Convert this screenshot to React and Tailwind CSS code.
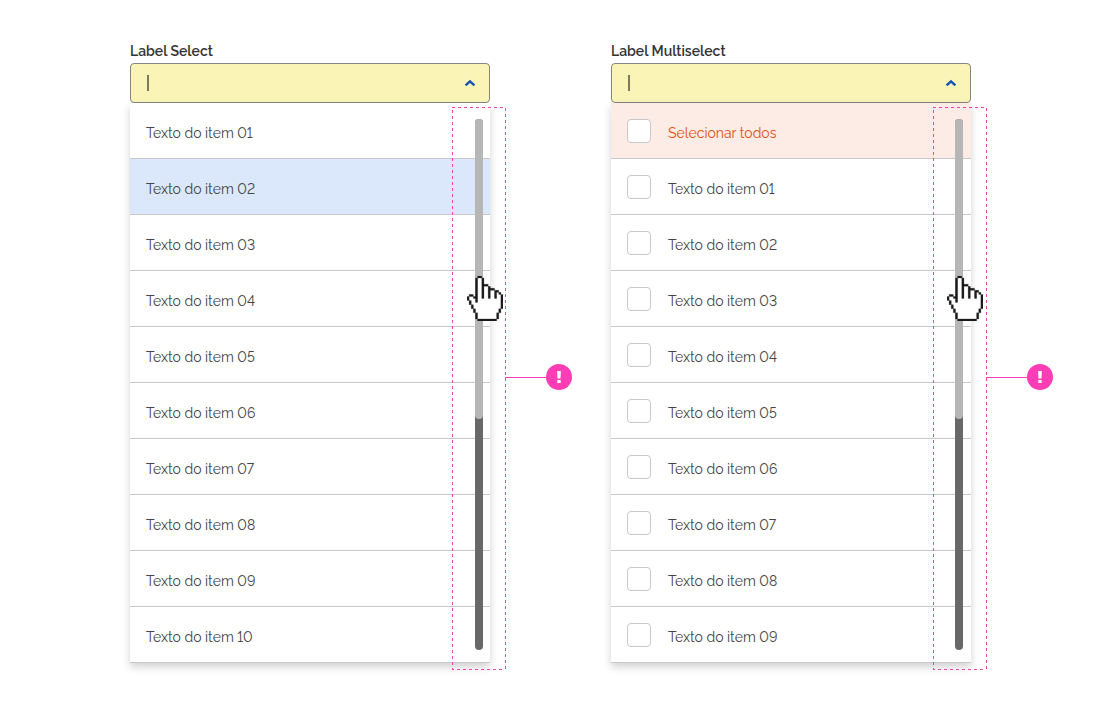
import React from "react";

const HAND = [
  "     ##          ",
  "    #..#         ",
  "    #..#         ",
  "    #..#         ",
  "    #..###       ",
  "    #..#..#      ",
  "    #..#..###    ",
  "    #..#..#..##  ",
  "    #..#..#..#.# ",
  " ## #..#..#..#..#",
  "#..##..#..#..#..#",
  "#...#...........#",
  " #..#...........#",
  " #..............#",
  "  #.............#",
  "  #.............#",
  "   #...........# ",
  "   #...........# ",
  "    #.........#  ",
  "    #.........#  ",
  "    #.........#  ",
  "     #########   ",
];

function cells(mark) {
  let d = "";
  HAND.forEach((row, y) => {
    row.split("").forEach((c, x) => {
      if (c === mark) d += `M${x} ${y}h1v1h-1z`;
    });
  });
  return d;
}

function HandCursor() {
  return (
    <svg
      className="absolute -left-2 top-[157px] h-[45px] w-9"
      viewBox="0 0 17 22"
      preserveAspectRatio="none"
      aria-hidden="true"
    >
      <path d={cells(".")} fill="#ffffff" stroke="#ffffff" strokeWidth="0.4" />
      <path d={cells("#")} fill="#1c1c1c" stroke="#1c1c1c" strokeWidth="0.12" />
    </svg>
  );
}

function Field({ id, label }) {
  return (
    <>
      <label htmlFor={id} className="block h-5 text-sm leading-4 font-semibold text-[#333333]">
        {label}
      </label>
      <div className="flex h-10 items-center rounded border border-[#868480] bg-[#faf4b7] pr-[11px] pl-4">
        <span className="h-4 w-0.5 bg-[#7d795c]" aria-hidden="true" />
        <input
          id={id}
          type="text"
          role="combobox"
          aria-expanded="true"
          aria-controls={`${id}-list`}
          className="h-full min-w-0 flex-1 bg-transparent text-sm text-[#444444] outline-none"
        />
        <button type="button" aria-label="Fechar lista" className="flex size-4 items-center justify-center">
          <svg className="h-2 w-3" viewBox="0 0 12 8" fill="none" aria-hidden="true">
            <path d="M1.6 6.4 6 2.4l4.4 4" stroke="#1553b6" strokeWidth="2.4" />
          </svg>
        </button>
      </div>
    </>
  );
}

function Scrollbar({ place }) {
  return (
    <div className={`absolute top-4 bottom-[13px] w-2 rounded-full bg-[#686868] ${place}`}>
      <div className="h-[300px] rounded-full bg-[#b6b6b6]" />
      <HandCursor />
    </div>
  );
}

function Callout() {
  return (
    <div className="pointer-events-none absolute -right-[15px] top-1 -bottom-1.5 w-[53px]">
      <svg className="size-full overflow-visible" aria-hidden="true">
        <rect
          width="100%"
          height="100%"
          fill="none"
          stroke="#ff3db5"
          strokeWidth="1"
          strokeDasharray="3 3"
          shapeRendering="crispEdges"
        />
      </svg>
      <div className="absolute left-full top-[257px] flex items-center">
        <span className="h-px w-[41px] bg-[#ff3db5]" />
        <svg className="size-[26px]" viewBox="0 0 26 26" role="img" aria-label="Atenção">
          <circle cx="13" cy="13" r="13" fill="#ff3db5" />
          <path d="M11.1 7h3.8l-.4 7.4h-3zM11.3 16h3.4v3h-3.4z" fill="#ffffff" />
        </svg>
      </div>
    </div>
  );
}

const ROW = "flex h-14 items-start border-b border-[#c8c8c8] px-4";
const TEXT = "text-sm leading-6 lining-nums";
const PANEL = "shadow-[0_4px_8px_rgba(0,0,0,0.18)]";

const numbers = Array.from({ length: 10 }, (_, i) => String(i + 1).padStart(2, "0"));

function Select() {
  return (
    <section>
      <Field id="select" label="Label Select" />
      <div className="relative">
        <ul id="select-list" role="listbox" aria-label="Label Select" className={PANEL}>
          {numbers.map((n) => (
            <li
              key={n}
              role="option"
              aria-selected={n === "02"}
              className={`${ROW} pt-[18px] text-[#444444] ${n === "02" ? "bg-[#dbe7fb]" : "bg-white"}`}
            >
              <span className={TEXT}>Texto do item {n}</span>
            </li>
          ))}
        </ul>
        <Scrollbar place="right-[7px]" />
        <Callout />
      </div>
    </section>
  );
}

function Multiselect() {
  const items = ["Selecionar todos", ...numbers.slice(0, 9).map((n) => `Texto do item ${n}`)];
  return (
    <section>
      <Field id="multiselect" label="Label Multiselect" />
      <div className="relative">
        <ul id="multiselect-list" className={PANEL}>
          {items.map((item, i) => (
            <li key={item}>
              <label
                className={`${ROW} gap-[17px] ${i === 0 ? "bg-[#fdebe5] text-[#e2500f]" : "bg-white text-[#444444]"}`}
              >
                <input
                  type="checkbox"
                  className="mt-4 size-6 shrink-0 appearance-none rounded border border-[#c8c8c8] bg-white checked:bg-[#1553b6]"
                />
                <span className={`${TEXT} pt-[18px]`}>{item}</span>
              </label>
            </li>
          ))}
        </ul>
        <Scrollbar place="right-2" />
        <Callout />
      </div>
    </section>
  );
}

export default function App() {
  return (
    <main className="grid min-h-screen grid-cols-2 gap-[121px] bg-white pt-[43px] pr-[129px] pb-12 pl-[130px] font-['Raleway','Lato',sans-serif]">
      <Select />
      <Multiselect />
    </main>
  );
}
